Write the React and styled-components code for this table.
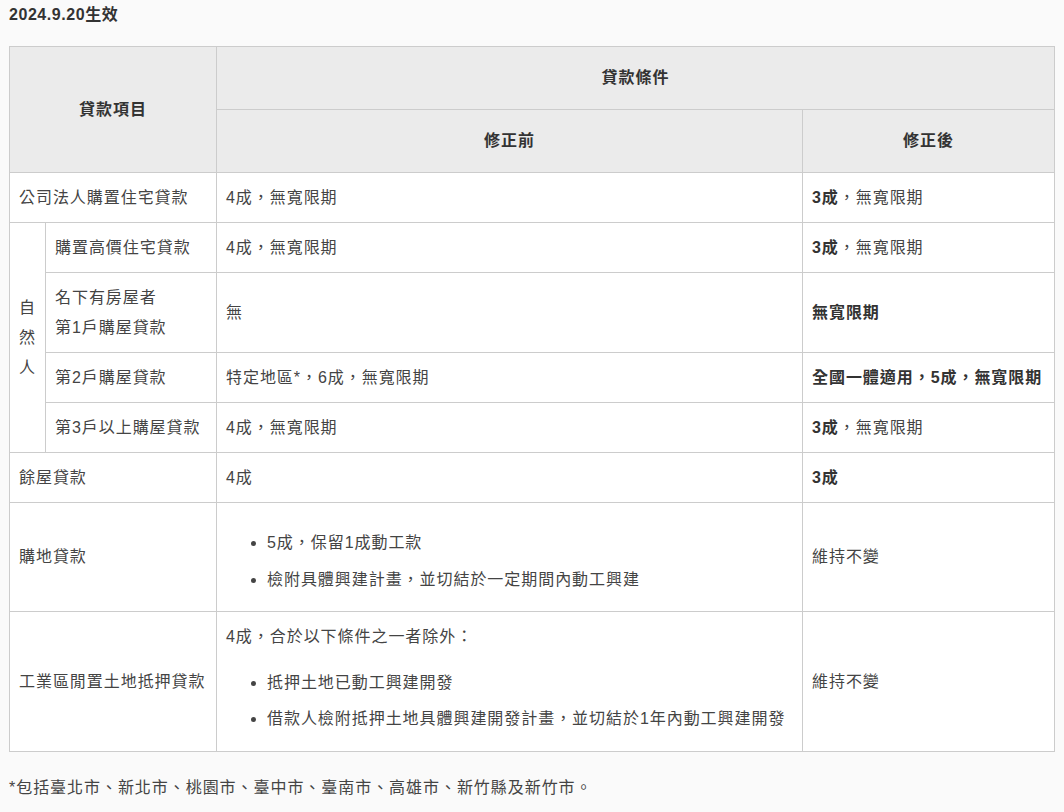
import React from "react";
import styled, { createGlobalStyle } from "styled-components";

const Global = createGlobalStyle`
  html, body { margin: 0; padding: 0; background: #fafafa; }
  body {
    font-family: "Liberation Sans", "Noto Sans CJK TC", sans-serif;
    color: #333;
    font-size: 16px;
    line-height: 30px;
    letter-spacing: 0.55px;
  }
`;

const Page = styled.div`
  padding: 0 9px;
`;

const Title = styled.div`
  font-weight: bold;
  line-height: 30px;
  margin-bottom: 16px;
`;

const Table = styled.table`
  width: 100%;
  border-collapse: collapse;
  table-layout: fixed;
  background: #fff;
  border: 1px solid #ccc;
  letter-spacing: 0.95px;
`;

const Th = styled.th`
  background: #ebebeb;
  border: 1px solid #ccc;
  padding: 16px 10px;
  font-weight: bold;
  text-align: center;
  vertical-align: middle;
  color: #333;
`;

const Td = styled.td`
  border: 1px solid #ccc;
  padding: 9.5px 9px;
  vertical-align: middle;
  text-align: left;
  color: #444;
  white-space: ${(p) => (p.$nowrap ? "nowrap" : "normal")};
`;

const Bold = styled.strong`
  font-weight: bold;
  color: #333;
`;

const List = styled.ul`
  margin: ${(p) => p.$margin || "15px 0 7px"};
  padding-left: 41px;
  li + li { margin-top: ${(p) => p.$gap || "7px"}; }
`;

const Para = styled.p`
  margin: 0;
`;

const Note = styled.div`
  margin-top: 21px;
  letter-spacing: 0.95px;
  color: #444;
`;

export default function App() {
  return (
    <Page>
      <Global />
      <Title>2024.9.20生效</Title>
      <Table>
        <colgroup>
          <col style={{ width: 36 }} />
          <col style={{ width: 171 }} />
          <col style={{ width: 586 }} />
          <col />
        </colgroup>
        <thead>
          <tr>
            <Th colSpan={2} rowSpan={2}>貸款項目</Th>
            <Th colSpan={2}>貸款條件</Th>
          </tr>
          <tr>
            <Th>修正前</Th>
            <Th>修正後</Th>
          </tr>
        </thead>
        <tbody>
          <tr>
            <Td colSpan={2}>公司法人購置住宅貸款</Td>
            <Td>4成，無寬限期</Td>
            <Td><Bold>3成</Bold>，無寬限期</Td>
          </tr>
          <tr>
            <Td rowSpan={4}>自然人</Td>
            <Td>購置高價住宅貸款</Td>
            <Td>4成，無寬限期</Td>
            <Td><Bold>3成</Bold>，無寬限期</Td>
          </tr>
          <tr>
            <Td>名下有房屋者<br />第1戶購屋貸款</Td>
            <Td>無</Td>
            <Td><Bold>無寬限期</Bold></Td>
          </tr>
          <tr>
            <Td>第2戶購屋貸款</Td>
            <Td>特定地區*，6成，無寬限期</Td>
            <Td $nowrap><Bold>全國一體適用，5成，無寬限期</Bold></Td>
          </tr>
          <tr>
            <Td>第3戶以上購屋貸款</Td>
            <Td>4成，無寬限期</Td>
            <Td><Bold>3成</Bold>，無寬限期</Td>
          </tr>
          <tr>
            <Td colSpan={2}>餘屋貸款</Td>
            <Td>4成</Td>
            <Td><Bold>3成</Bold></Td>
          </tr>
          <tr>
            <Td colSpan={2}>購地貸款</Td>
            <Td>
              <List>
                <li>5成，保留1成動工款</li>
                <li>檢附具體興建計畫，並切結於一定期間內動工興建</li>
              </List>
            </Td>
            <Td>維持不變</Td>
          </tr>
          <tr>
            <Td colSpan={2}>工業區閒置土地抵押貸款</Td>
            <Td>
              <Para>4成，合於以下條件之一者除外：</Para>
              <List $margin="16px 0 8px" $gap="6px">
                <li>抵押土地已動工興建開發</li>
                <li>借款人檢附抵押土地具體興建開發計畫，並切結於1年內動工興建開發</li>
              </List>
            </Td>
            <Td>維持不變</Td>
          </tr>
        </tbody>
      </Table>
      <Note>*包括臺北市、新北市、桃園市、臺中市、臺南市、高雄市、新竹縣及新竹市。</Note>
    </Page>
  );
}
